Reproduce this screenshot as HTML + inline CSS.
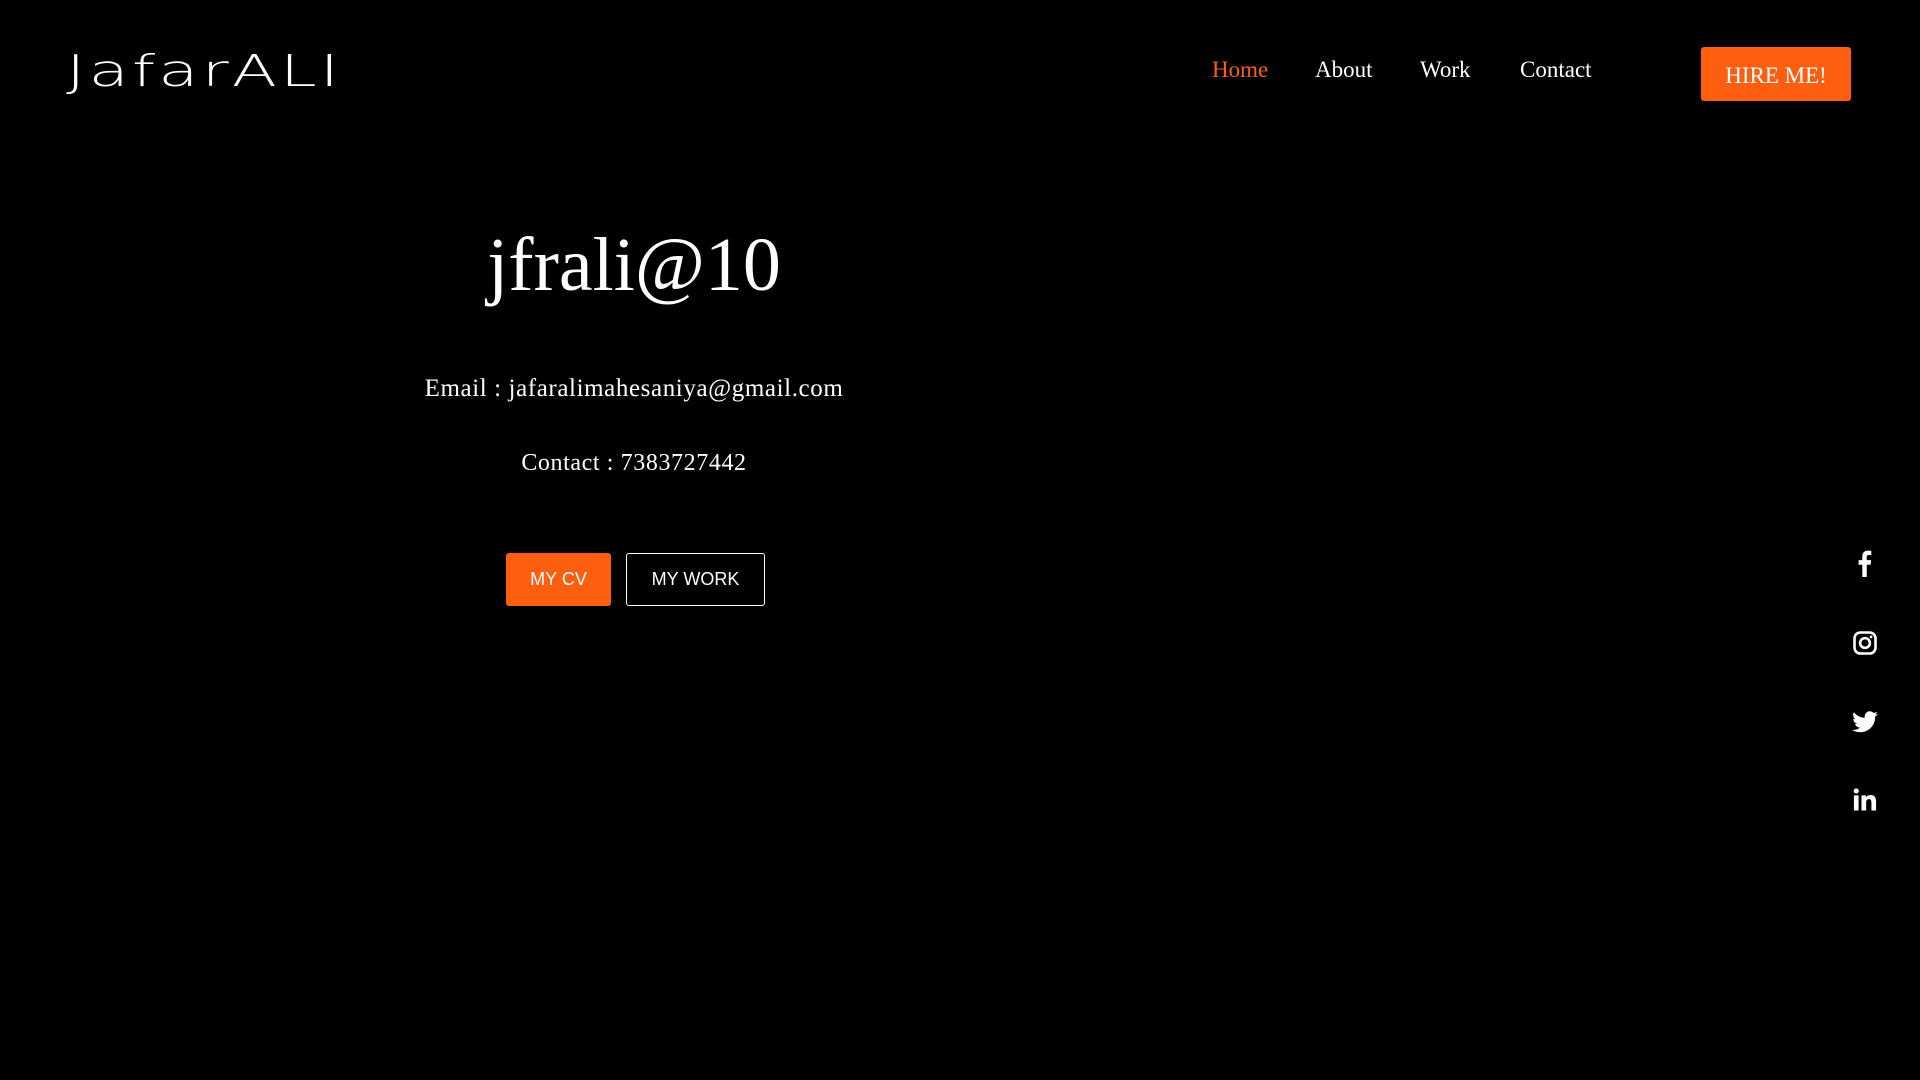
<!DOCTYPE html>
<html><head><style>
*{margin:0;padding:0;box-sizing:border-box}
body{width:1920px;height:1080px;background:#000;color:#fff;position:relative;overflow:hidden;font-family:"Liberation Serif",serif}
.logo{position:absolute;left:66px;top:46px;font-family:"DejaVu Sans",sans-serif;font-size:44px;font-weight:200;letter-spacing:2px;transform:scaleX(1.5);transform-origin:left;}
.nav a{position:absolute;top:57px;font-size:23px;color:#fff;text-decoration:none}
.hire{position:absolute;left:1701px;top:47px;width:150px;height:54px;background:#fe5e10;border-radius:3px;font-size:23px;display:flex;align-items:center;justify-content:center;padding-top:3px}
.c{position:absolute;left:0;width:1268px;text-align:center}
h1{font-weight:normal;font-size:76px}
.b{position:absolute;top:553px;height:53px;font-family:"Liberation Sans",sans-serif;font-size:18px;display:flex;align-items:center;justify-content:center;border-radius:3px}
.ic{position:absolute;left:1851px;width:28px;height:28px}
</style></head><body>
<div class="logo">JafarALI</div>
<div class="nav">
<a style="left:1212px;color:#fe5e10">Home</a>
<a style="left:1315px">About</a>
<a style="left:1420px">Work</a>
<a style="left:1520px">Contact</a>
</div>
<div class="hire">HIRE ME!</div>
<div class="c" style="top:222px"><h1>jfrali@10</h1></div>
<div class="c" style="top:375px;font-size:25px;letter-spacing:0.6px">Email : jafaralimahesaniya@gmail.com</div>
<div class="c" style="top:450px;font-size:24px;letter-spacing:0.6px">Contact : 7383727442</div>
<div class="b" style="left:506px;width:105px;background:#fe5e10">MY CV</div>
<div class="b" style="left:626px;width:139px;border:1px solid #fff">MY WORK</div>
<svg class="ic" style="top:549px" viewBox="0 0 24 24"><path fill="#fff" d="M13.5 24V13.5h3.3l.5-4h-3.8V7c0-1.1.3-1.9 1.9-1.9h2V1.6C17 1.5 15.8 1.4 14.5 1.4c-2.9 0-4.8 1.7-4.8 5v3.1H6.5v4h3.2V24z"/></svg>
<svg class="ic" style="top:629px" viewBox="0 0 24 24"><rect x="3" y="3" width="18" height="18" rx="5" fill="none" stroke="#fff" stroke-width="2.2"/><circle cx="12" cy="12" r="4.2" fill="none" stroke="#fff" stroke-width="2.2"/><circle cx="17.2" cy="6.8" r="1.2" fill="#fff"/></svg>
<svg class="ic" style="top:708px" viewBox="0 0 24 24"><path fill="#fff" d="M23 5c-.8.4-1.7.6-2.6.7.9-.6 1.6-1.4 2-2.5-.9.5-1.9.9-2.9 1.1a4.5 4.5 0 0 0-7.7 4.1C8 8.2 4.7 6.4 2.5 3.7c-1.2 2-.6 4.6 1.4 6-.7 0-1.4-.2-2-.6 0 2.2 1.5 4.1 3.6 4.5-.7.2-1.4.2-2 .1.6 1.8 2.3 3.1 4.2 3.1A9 9 0 0 1 1 18.7 12.8 12.8 0 0 0 20.7 7.4c.9-.6 1.7-1.4 2.3-2.4z"/></svg>
<svg class="ic" style="top:786px" viewBox="0 0 24 24"><path fill="#fff" d="M2.5 8h4v13h-4zM4.5 2a2.2 2.2 0 1 1 0 4.4 2.2 2.2 0 0 1 0-4.4zM9 8h3.8v1.8c.5-1 1.9-2.1 3.9-2.1 4.1 0 4.8 2.7 4.8 6.2V21h-4v-6.3c0-1.5 0-3.4-2.1-3.4s-2.4 1.6-2.4 3.3V21H9z"/></svg>
</body></html>
